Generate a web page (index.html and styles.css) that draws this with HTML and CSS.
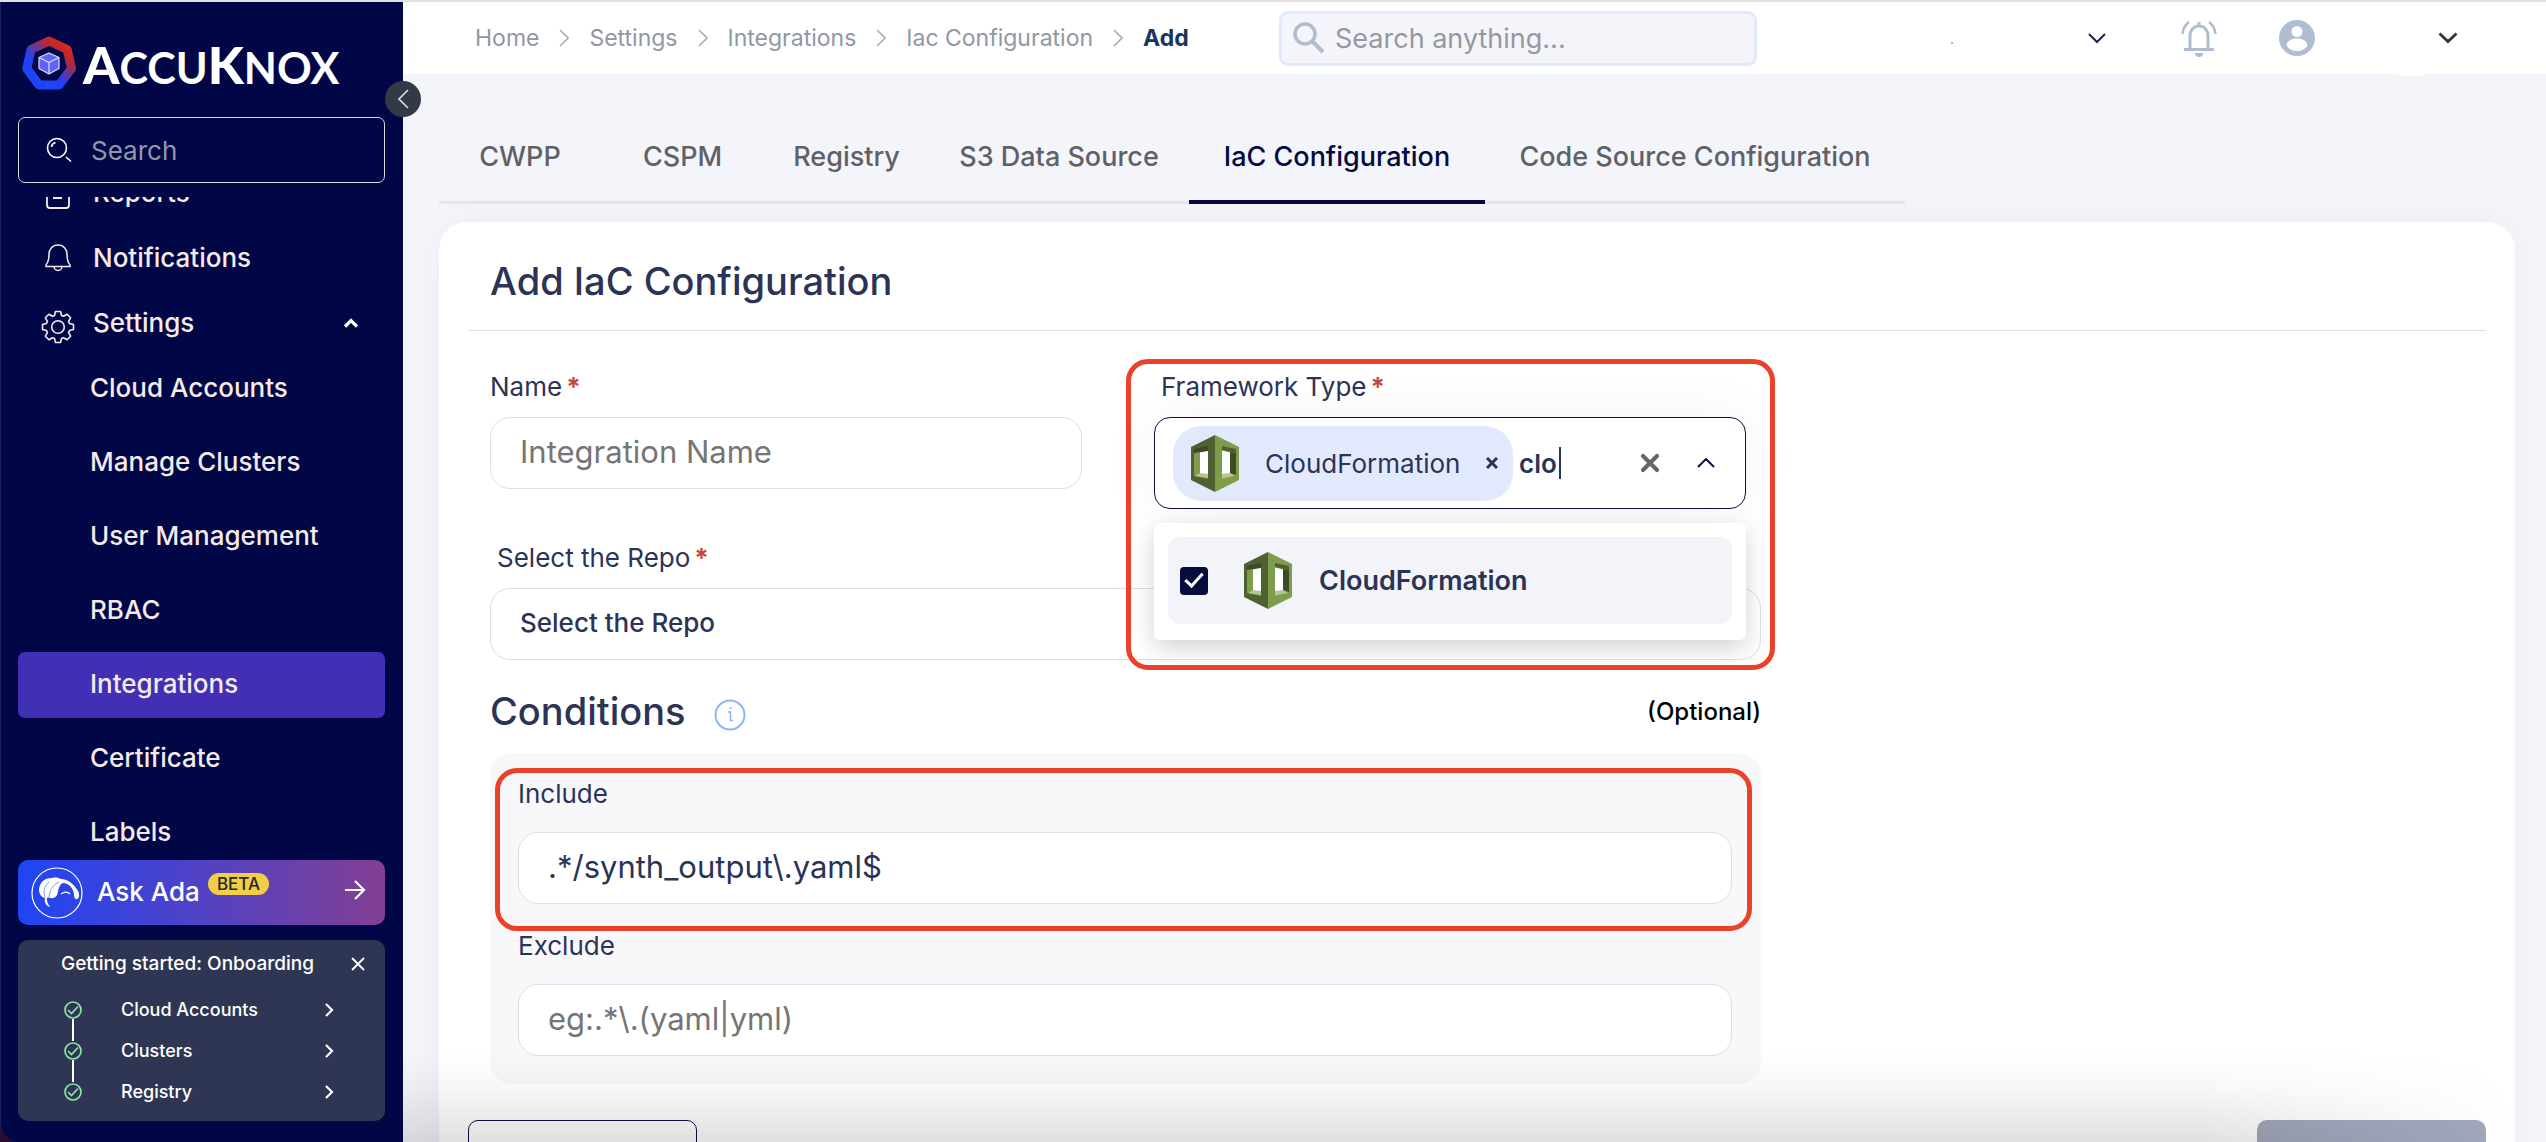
FILE: index.html
```html
<!DOCTYPE html>
<html lang="en">
<head>
<meta charset="utf-8">
<title>Add IaC Configuration</title>
<meta name="viewport" content="width=device-width, initial-scale=1">
<link rel="stylesheet" href="styles.css">
</head>
<body>
<svg class="sprite" aria-hidden="true">
  <symbol id="cloudformation" viewBox="0 0 48 57">
    <path fill="#4f6130" d="M24 0 0 12v33l24 12z"/>
    <path fill="#7f9c4b" d="m24 0 24 12v33L24 57z"/>
    <path fill="#7f9c4b" d="M3 17l14-4v31L3 41z"/>
    <path fill="#3c4a25" d="M3 14l14-3v5L3 18z"/>
    <path fill="#fff" d="M9 17.500l8-1.500v24.500l-8-.5z"/>
    <path fill="#b5c78d" d="M4 41l5-3 8 1v4z"/>
    <path fill="#4f6130" d="M31 11l14 3v4l-14-3z"/>
    <path fill="#3c4a25" d="M39 17l6 1v22l-6-2z"/>
    <path fill="#fff" d="M31 15.500l8 2V40l-8 .5z"/>
    <path fill="#b5c78d" d="M31 39l8-1 5 3-13 2.500z"/>
  </symbol>
  <symbol id="done" viewBox="0 0 20 20">
    <g fill="none" stroke="#8fe3a6" stroke-width="1.700"><circle cx="10" cy="10" r="8"/><path d="m5 10 3.500 3.500L15 6.500"/></g>
  </symbol>
  <symbol id="right" viewBox="0 0 10 14">
    <path fill="none" stroke="#fff" stroke-width="2.200" d="m2 1 6 6-6 6"/>
  </symbol>
  <symbol id="crumb" viewBox="0 0 10 18">
    <path fill="none" stroke="#a4adb8" stroke-width="1.600" d="m1 1 8 8-8 8"/>
  </symbol>
</svg>

<div class="app">
  <div class="side-wrap">
    <aside class="sidebar">
      <a class="brand" href="#" aria-label="AccuKnox">
        <svg width="54" height="54" viewBox="0 0 54 54" aria-hidden="true">
          <defs><linearGradient id="ring" x1=".85" y1=".1" x2=".25" y2=".85"><stop offset="0" stop-color="#d12b1d"/><stop offset=".2" stop-color="#bb2730"/><stop offset=".7" stop-color="#2342ee"/><stop offset="1" stop-color="#1c45fa"/></linearGradient></defs>
          <path fill="none" stroke="url(#ring)" stroke-width="9" stroke-linejoin="round" d="M27 5 9 13.500 4.800 32.500 17 49h20l12.500-16.500L45.200 13.500z"/>
          <g stroke="#dcdcff" stroke-width="1.200" stroke-linejoin="round"><path fill="#6163f5" d="m27 17 10 4.500v11L27 38l-10-5.500v-11z"/><path fill="none" d="m17 21.500 10 5 10-5M27 26.500V38"/></g>
        </svg>
        <span class="wordmark"><b>A</b>CCU<b>K</b>NOX</span>
      </a>
      <label class="side-search">
        <svg width="26" height="26" viewBox="0 0 26 26" fill="none" stroke="#fff" stroke-width="1.600" aria-hidden="true"><circle cx="11" cy="11" r="9.500"/><path d="M5.500 10a5.500 5.500 0 0 1 4-4.500M20 20l5 4.500"/></svg>
        <input type="search" placeholder="Search" aria-label="Search menu">
      </label>
      <nav class="menu" aria-label="Main">
        <ul>
          <li><a class="top" href="#">
            <svg width="34" height="34" viewBox="0 0 34 34" fill="none" stroke="#f3ecec" stroke-width="1.800" aria-hidden="true"><rect x="6" y="6" width="22" height="26" rx="3"/><path d="M12 22h9M12 15h9"/></svg>Reports</a></li>
          <li><a class="top" href="#">
            <svg width="34" height="34" viewBox="0 0 34 34" fill="none" stroke="#f3ecec" stroke-width="1.500" aria-hidden="true"><path d="M17 4c-5.500 0-9 4-9 9.500 0 5-1 8-3 10.500v1.500h24V24c-2-2.500-3-5.500-3-10.500C26 8 22.500 4 17 4zM13 25.500a4 4 0 0 0 8 0"/></svg>Notifications</a></li>
          <li><a class="top" href="#" aria-expanded="true">
            <svg class="gear" width="34" height="34" viewBox="0 0 34 34" fill="none" stroke="#f3ecec" stroke-width="1.600" stroke-linejoin="round" aria-hidden="true"><circle cx="17" cy="17" r="6.300"/><path d="M14.500 1.500h5l1 4 2 .8 3.600-2 3.500 3.500-2 3.600.9 2.100 4 1v5l-4 1-.9 2.100 2 3.600-3.500 3.500-3.600-2-2 .8-1 4h-5l-1-4-2-.8-3.600 2-3.500-3.500 2-3.600-.9-2.100-4-1v-5l4-1 .9-2.100-2-3.600 3.500-3.500 3.600 2 2-.8z"/></svg>Settings
            <svg class="caret" width="14" height="10" viewBox="0 0 14 10" fill="none" stroke="#fff" stroke-width="3.200" aria-hidden="true"><path d="m1 8.500 6-6 6 6"/></svg></a>
            <ul class="sub">
              <li><a href="#">Cloud Accounts</a></li>
              <li><a href="#">Manage Clusters</a></li>
              <li><a href="#">User Management</a></li>
              <li><a href="#">RBAC</a></li>
              <li><a class="active" href="#" aria-current="page">Integrations</a></li>
              <li><a href="#">Certificate</a></li>
              <li><a href="#">Labels</a></li>
            </ul>
          </li>
        </ul>
      </nav>
      <button class="ada" type="button">
        <svg width="52" height="52" viewBox="0 0 52 52" aria-hidden="true"><circle cx="26" cy="26" r="25" fill="none" stroke="#fff" stroke-width="1.200"/><path fill="#fff" d="M8 22c1-8 7-11 13-11 4-1 7 0 9 1 7 0 13 5 17 12 2 4 1 8-1 8-2 1-3-2-3-5-1-6-5-11-11-11-3 1-4 4-5 8 0 5-4 8-7 7-3 0-5-1-4 2 0 3 2 5 3 7-4-1-6-5-5-9-4-1-6-4-6-9z"/><path fill="none" stroke="#7f97ff" stroke-width="1" d="M14 30c-2-5-1-11 4-15M18 31c0-7 4-13 10-16"/><path fill="none" stroke="#fff" stroke-width="1.200" d="M30 27c4-3 7-2 9 0"/></svg>
        <span>Ask Ada</span><em>BETA</em>
        <svg class="arrow" width="22" height="20" viewBox="0 0 22 20" fill="none" stroke="#fff" stroke-width="2.200" aria-hidden="true"><path d="M1 10h18M11 1l9 9-9 9"/></svg>
      </button>
      <section class="onboard">
        <header><h2>Getting started: Onboarding</h2>
          <button type="button" aria-label="Close"><svg width="14" height="14" viewBox="0 0 14 14" stroke="#fff" stroke-width="1.900"><path d="m1 1 12 12M13 1 1 13"/></svg></button></header>
        <ol>
          <li><svg class="tick"><use href="#done"/></svg><a href="#">Cloud Accounts<svg><use href="#right"/></svg></a></li>
          <li><svg class="tick"><use href="#done"/></svg><a href="#">Clusters<svg><use href="#right"/></svg></a></li>
          <li><svg class="tick"><use href="#done"/></svg><a href="#">Registry<svg><use href="#right"/></svg></a></li>
        </ol>
      </section>
    </aside>
    <button class="collapse" type="button" aria-label="Collapse sidebar"><svg width="12" height="20" viewBox="0 0 12 20" fill="none" stroke="#d8dade" stroke-width="1.700"><path d="m11 1-9 9 9 9"/></svg></button>
  </div>

  <div class="page">
    <header class="topbar">
      <nav class="crumbs" aria-label="Breadcrumb">
        <a href="#">Home</a><svg><use href="#crumb"/></svg>
        <a href="#">Settings</a><svg><use href="#crumb"/></svg>
        <a href="#">Integrations</a><svg><use href="#crumb"/></svg>
        <a href="#">Iac Configuration</a><svg><use href="#crumb"/></svg>
        <strong>Add</strong>
      </nav>
      <label class="search">
        <svg width="32" height="32" viewBox="0 0 32 32" fill="none" stroke="#b0bdd1" aria-hidden="true"><circle cx="12" cy="12" r="10" stroke-width="3.500"/><path stroke-width="4" d="m19 19 11 11"/></svg>
        <input type="search" placeholder="Search anything..." aria-label="Search anything">
      </label>
      <div class="tools">
        <button class="workspace" type="button" aria-label="Workspace"><span>.</span><svg width="18" height="11" viewBox="0 0 18 11" fill="none" stroke="#1d2550" stroke-width="2"><path d="m1 1 8 8 8-8"/></svg></button>
        <button type="button" aria-label="Notifications"><svg width="38" height="38" viewBox="0 0 38 38" fill="none" stroke="#b0bdd1" stroke-width="3"><path d="M10 30V17c0-6 4-10 9-10s9 4 9 10v13M4 30.500h30M19 7V3"/><path stroke-width="2.500" d="M9 3c-4 3-6 7-6.500 12M29 3c4 3 6 7 6.500 12"/><path fill="#b0bdd1" stroke="none" d="M15 34h8a4 4 0 0 1-8 0z"/></svg></button>
        <button type="button" aria-label="Profile"><svg width="38" height="38" viewBox="0 0 38 38"><circle cx="19" cy="19" r="18" fill="#b0bdd1"/><circle cx="19" cy="12.500" r="5.500" fill="#fff"/><path fill="#fff" d="M8.500 26c1-5 6-6.500 10.500-6.500S28.500 21 29.500 26c-2 4-6 6-10.500 6s-8.500-2-10.500-6z"/></svg></button>
        <button class="account" type="button" aria-label="Account"><svg width="20" height="12" viewBox="0 0 20 12" fill="none" stroke="#333" stroke-width="2.800"><path d="m1.500 1.500 8.500 8 8.500-8"/></svg></button>
      </div>
    </header>

    <nav class="tabs" aria-label="Integration types">
      <a href="#">CWPP</a><a href="#">CSPM</a><a href="#">Registry</a><a href="#">S3 Data Source</a><a class="current" href="#" aria-current="page">IaC Configuration</a><a href="#">Code Source Configuration</a>
    </nav>

    <main class="card">
      <h1>Add IaC Configuration</h1>
      <form>
        <div class="row">
          <div class="field">
            <label for="name">Name<i>*</i></label>
            <input id="name" class="box" type="text" placeholder="Integration Name">
          </div>
          <div class="field framework">
            <label for="fw">Framework Type<i>*</i></label>
            <div class="combo">
              <span class="chip"><svg width="48" height="57"><use href="#cloudformation"/></svg>CloudFormation<button type="button" aria-label="Remove CloudFormation"><svg width="12" height="12" viewBox="0 0 12 12" stroke="#2b3356" stroke-width="3"><path d="m1 1 10 10M11 1 1 11"/></svg></button></span>
              <input id="fw" type="text" value="clo">
              <button class="clear" type="button" aria-label="Clear all"><svg width="20" height="20" viewBox="0 0 20 20" stroke="#666" stroke-width="4.200" stroke-linecap="round"><path d="m3 3 14 14M17 3 3 17"/></svg></button>
              <button type="button" aria-label="Close list"><svg width="18" height="10" viewBox="0 0 18 10" fill="none" stroke="#0b1247" stroke-width="2"><path d="m1 9 8-8 8 8"/></svg></button>
            </div>
            <div class="options">
              <label><input type="checkbox" checked><svg width="48" height="57"><use href="#cloudformation"/></svg>CloudFormation</label>
            </div>
          </div>
        </div>
        <div class="field repo">
          <label for="repo">Select the Repo<i>*</i></label>
          <select id="repo" class="box"><option>Select the Repo</option></select>
        </div>
        <div class="cond-head">
          <h2>Conditions</h2>
          <svg width="32" height="32" viewBox="0 0 32 32" fill="none" stroke="#8db5f6" stroke-width="2" aria-hidden="true"><circle cx="16" cy="16" r="14.500"/><path stroke-width="1.500" d="M14 13h2.500v8.500h2.500M15.500 9h1.500v1"/></svg>
          <span>(Optional)</span>
        </div>
        <div class="conditions">
          <div class="field include">
            <label for="inc">Include</label>
            <input id="inc" class="box" type="text" value=".*/synth_output\.yaml$">
          </div>
          <div class="field">
            <label for="exc">Exclude</label>
            <input id="exc" class="box" type="text" placeholder="eg:.*\.(yaml|yml)">
          </div>
        </div>
      </form>
      <footer>
        <button class="cancel" type="button" aria-label="Cancel"></button>
        <button class="save" type="submit" aria-label="Save"></button>
      </footer>
    </main>
    <div class="fade"></div>
  </div>
</div>
</body>
</html>
```
FILE: styles.css
```css
*, ::before, ::after { box-sizing: border-box; }
body {
  margin: 0;
  font-family: Inter, "Open Sans", sans-serif;
  color: #2b3356;
  background: #f3f5fa;
}
h1, h2, ul, ol { margin: 0; padding: 0; font-weight: 500; }
ul, ol { list-style: none; }
a { color: inherit; text-decoration: none; }
button { border: 0; padding: 0; background: none; font: inherit; color: inherit; display: flex; align-items: center; cursor: pointer; }
input, select { font: inherit; color: inherit; outline: 0; }
svg { flex: none; display: block; }
.sprite { position: absolute; width: 0; height: 0; }

.app {
  display: flex;
  height: 100vh;
  overflow: hidden;
  border-top: 2px solid #e3e3e3;
}

/* Sidebar */
.side-wrap { position: relative; flex: none; width: 403px; background: #2d0b2c; z-index: 2; }
.sidebar {
  height: 100%;
  display: flex;
  flex-direction: column;
  padding: 34px 18px 21px;
  background: #010647;
  box-shadow: inset 1px 0 #1b205d;
  border-bottom-left-radius: 18px;
  color: #f5eaea;
  font-size: 26px;
}
.brand { display: flex; align-items: center; gap: 7px; padding-left: 4px; height: 54px; margin-bottom: 27px; color: #fff; }
.wordmark { font: 700 43px/54px Lato, sans-serif; padding-top: 6px; }
.wordmark b { font-size: 52px; }
.side-search {
  display: flex;
  align-items: center;
  gap: 19px;
  height: 66px;
  padding: 0 27px;
  margin-bottom: 14px;
  border: 1px solid #d9d9dc;
  border-radius: 7px;
}
.side-search input { flex: 1; min-width: 0; border: 0; padding: 0; background: none; }
.side-search input::placeholder { color: #9397a8; opacity: 1; }
.menu { flex: 1; min-height: 0; overflow: hidden; }
.menu > ul { margin-top: -37px; }
.menu .top { display: flex; align-items: center; height: 65px; padding: 0 27px 0 23px; gap: 18px; }
.menu .gear { margin-top: 8px; }
.menu .caret { margin-left: auto; }
.sub { display: grid; gap: 8px; padding-top: 1px; }
.sub a { display: block; height: 66px; line-height: 64px; padding-left: 72px; border-radius: 7px; }
.sub .active { background: #4130b6; }

.ada {
  height: 65px;
  flex: none;
  padding: 0 19px 0 13px;
  margin-bottom: 15px;
  border-radius: 10px;
  background: linear-gradient(90deg, #1f45f5, #833f92);
  color: #fff;
  font-weight: 500;
}
.ada span { margin: 0 8px 3px 14px; }
.ada em { padding: 0 9px; margin-bottom: 18px; border-radius: 11px; background: #f2cd46; color: #26262b; font: 500 17px/22px Inter, sans-serif; }
.ada .arrow { margin: 0 0 6px auto; }

.onboard { flex: none; height: 181px; padding: 9px 20px 0 43px; border-radius: 10px; background: #2e3654; color: #fff; font-size: 18px; font-weight: 500; }
.onboard header { display: flex; align-items: center; justify-content: space-between; height: 30px; margin-bottom: 10px; }
.onboard h2 { font-size: 19px; line-height: 30px; }
.onboard li { position: relative; display: flex; align-items: center; height: 41px; gap: 38px; }
.onboard .tick { width: 20px; height: 20px; margin-left: 2px; }
.onboard li + li::before { content: ""; position: absolute; left: 11px; top: -11px; width: 2px; height: 22px; background: #fff; }
.onboard a { flex: 1; display: flex; align-items: center; justify-content: space-between; padding-right: 31px; }
.onboard a svg { width: 10px; height: 14px; }

.collapse { position: absolute; top: 79px; right: -18px; width: 36px; height: 36px; border-radius: 50%; background: #333a45; justify-content: center; }

/* Page */
.page {
  position: relative;
  flex: 1;
  min-width: 0;
  display: flex;
  flex-direction: column;
  background: #f3f5fa;
}
.topbar { flex: none; display: flex; align-items: center; height: 72px; padding-left: 72px; background: #fff; }
.crumbs { display: flex; align-items: center; gap: 20px; width: 804px; font-size: 23px; color: #8f98a3; white-space: nowrap; }
.crumbs svg { width: 10px; height: 18px; }
.crumbs strong { color: #17365f; font-weight: 700; }
.search {
  display: flex;
  align-items: center;
  gap: 10px;
  width: 478px;
  height: 55px;
  padding: 0 11px;
  border: 3px solid #dfeafd;
  border-radius: 9px;
  background: #f3f5fa;
  font-size: 27px;
}
.search input { flex: 1; min-width: 0; border: 0; padding: 0; background: none; }
.search input::placeholder { color: #94999f; opacity: 1; }
.tools { flex: 1; display: flex; justify-content: flex-end; align-items: center; gap: 60px; padding-right: 88px; }
.workspace { width: 156px; justify-content: space-between; margin-right: 14px; font-size: 14px; color: #888; }
.account { position: relative; width: 82px; justify-content: flex-end; }
.account::after { content: ""; position: absolute; left: 18px; top: 36px; width: 34px; height: 8px; border-radius: 0 0 17px 17px; background: #fff; }

.tabs {
  flex: none;
  display: grid;
  grid-template-columns: 162fr 163fr 165fr 260fr 296fr 420fr;
  width: 1466px;
  max-width: 100%;
  margin: 35px 0 18px 36px;
  font-size: 27px;
  font-weight: 500;
  color: #5f6165;
  text-align: center;
  white-space: nowrap;
}
.tabs a { height: 95px; line-height: 96px; box-shadow: inset 0 -3px #e4e6ef; }
.tabs .current { color: #030a3f; box-shadow: inset 0 -4px #030a3f; }

.card {
  flex: 1 0 auto;
  margin: 0 31px 0 36px;
  padding: 10px 29px 0;
  border-radius: 28px 28px 0 0;
  background: #fff;
  box-shadow: 0 0 40px #00005008;
}
h1 { padding-left: 22px; line-height: 98px; font-size: 38px; border-bottom: 1px solid #dcdee2; }
form { max-width: 1315px; padding: 38px 22px 0; }
.row { display: grid; grid-template-columns: 1fr 1fr; gap: 72px; align-items: start; padding-right: 15px; margin-bottom: 31px; }
.field > label { display: block; height: 36px; line-height: 36px; margin-bottom: 12px; font-size: 26px; }
.field i { margin-left: 4px; font-style: normal; font-weight: 700; color: #c9453c; }
.box {
  display: block;
  width: 100%;
  height: 72px;
  padding: 0 29px 3px;
  border: 1px solid #dcdfea;
  border-radius: 20px;
  background: #fff;
  font-size: 31px;
}
.box::placeholder { color: #757575; opacity: 1; }
.repo > label { padding-left: 7px; }
select.box { appearance: none; font-size: 26px; font-weight: 500; }

/* Framework picker */
.framework { position: relative; }
.framework > label { padding-left: 7px; }
.combo {
  display: flex;
  align-items: center;
  height: 92px;
  padding: 0 30px 0 18px;
  border: 1px solid #0b1247;
  border-radius: 16px;
  background: #fff;
  box-shadow: 0 0 60px #0000000d;
  font-size: 26px;
}
.chip { display: flex; align-items: center; height: 75px; width: 340px; padding: 0 18px; gap: 26px; border-radius: 28px; background: #e3e9fd; }
.chip button { margin-left: auto; }
.combo input { width: 42px; height: 32px; margin-left: 6px; padding: 0; border: 0; border-right: 2px solid #2b3356; font-weight: 600; }
.combo .clear { margin: 0 37px 0 auto; }
.options {
  position: absolute;
  z-index: 1;
  left: 0;
  right: 0;
  top: 154px;
  padding: 14px 14px 16px;
  border-radius: 6px;
  background: #fff;
  box-shadow: 0 8px 24px #0000002e;
}
.options label { display: flex; align-items: center; gap: 27px; height: 87px; padding-left: 12px; border-radius: 12px; background: #f3f4fa; font-size: 27px; font-weight: 600; }
.options input {
  appearance: none;
  width: 28px;
  height: 28px;
  margin: 0 9px 0 0;
  border-radius: 4px;
  background: #050c3e;
  display: grid;
  place-items: center;
}
.options input:checked::after { content: ""; width: 10px; height: 18px; margin-bottom: 5px; border: solid #fff; border-width: 0 3px 3px 0; transform: rotate(42deg); }

/* Highlight outlines lie over the fields they surround */
.framework::after, .include::after {
  content: "";
  position: absolute;
  z-index: 2;
  border: 5px solid #ea4228;
  border-radius: 22px;
  pointer-events: none;
}
.framework::after { left: -28px; right: -29px; top: -10px; height: 311px; }
.include::after { left: -23px; right: -20px; top: -8px; height: 163px; }

/* Conditions */
.cond-head { display: flex; align-items: center; height: 44px; margin: 29px 0 20px; }
.cond-head h2 { font-size: 38px; line-height: 44px; }
.cond-head svg { margin-left: 28px; margin-top: 8px; }
.cond-head span { margin-left: auto; color: #000; font-size: 24px; font-weight: 500; }
.conditions { display: grid; gap: 24px; padding: 23px 29px 28px 28px; border-radius: 22px; background: #f8f8fb; }
.conditions .field > label { margin-bottom: 20px; }
.include { position: relative; }

footer { display: flex; justify-content: space-between; margin-top: 36px; }
footer button { width: 229px; height: 66px; border-radius: 10px; }
.cancel { border: 1px solid #0a1147; }
.save { background: #a3a8bd; }
.fade { position: absolute; left: 0; right: 31px; bottom: 0; height: 90px; background: linear-gradient(#0000, #00000008 40%, #0000001f); mask-image: linear-gradient(90deg, #000 85%, #0000); pointer-events: none; }
```
